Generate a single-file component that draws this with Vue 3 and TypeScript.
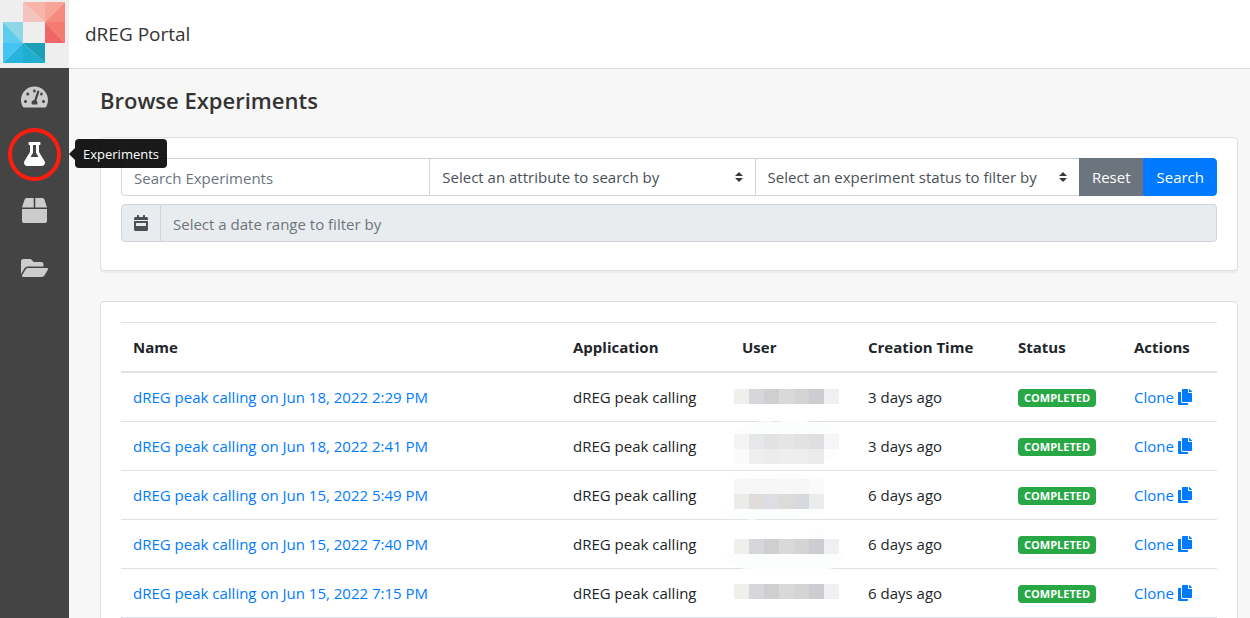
<script setup lang="ts">
import { ref } from 'vue'

interface Tile {
  x: number
  y: number
  fill: string
}

interface Experiment {
  name: string
  application: string
  created: string
  status: string
  haze: string
  tiles: Tile[]
}

interface NavItem {
  label: string
  viewBox: string
  width: number
  path: string
}

const navItems: NavItem[] = [
  {
    label: 'Dashboard',
    viewBox: '0 0 576 512',
    width: 27,
    path: 'M288 32C128.94 32 0 160.94 0 320c0 52.8 14.25 102.26 39.06 144.8 5.61 9.62 16.3 15.2 27.44 15.2h443c11.14 0 21.83-5.58 27.44-15.2C561.75 422.26 576 372.8 576 320c0-159.06-128.94-288-288-288zm0 64c14.71 0 26.58 10.13 30.32 23.65-1.11 2.26-2.64 4.23-3.45 6.67l-9.22 27.67c-5.13 3.49-10.97 6.01-17.64 6.01-17.67 0-32-14.33-32-32S270.33 96 288 96zM96 384c-17.67 0-32-14.33-32-32s14.33-32 32-32 32 14.33 32 32-14.33 32-32 32zm48-160c-17.67 0-32-14.33-32-32s14.33-32 32-32 32 14.33 32 32-14.33 32-32 32zm246.77-72.41l-61.33 184C343.13 347.33 352 364.54 352 384c0 11.72-3.38 22.55-8.88 32H232.88c-5.5-9.45-8.88-20.28-8.88-32 0-33.94 26.5-61.43 59.9-63.59l61.34-184.01c4.17-12.56 17.73-19.45 30.36-15.17 12.57 4.19 19.35 17.79 15.17 30.36zm14.66 57.2l15.52-46.55c3.47-1.29 7.13-2.23 11.05-2.23 17.67 0 32 14.33 32 32s-14.33 32-32 32c-11.38-.01-20.89-6.28-26.57-15.22zM480 384c-17.67 0-32-14.33-32-32s14.33-32 32-32 32 14.33 32 32-14.33 32-32 32z',
  },
  {
    label: 'Experiments',
    viewBox: '0 0 448 512',
    width: 21,
    path: 'M437.2 403.5L320 215V64h8c13.3 0 24-10.7 24-24V24c0-13.3-10.7-24-24-24H120c-13.3 0-24 10.7-24 24v16c0 13.3 10.7 24 24 24h8v151L10.8 403.5C-18.5 450.6 15.3 512 70.9 512h306.2c55.7 0 89.4-61.5 60.1-108.5zM137.9 320l48.2-77.6c3.7-5.2 5.8-11.6 5.8-18.4V64h64v160c0 6.9 2.2 13.2 5.8 18.4l48.2 77.6h-172z',
  },
  {
    label: 'Applications',
    viewBox: '0 0 512 512',
    width: 25,
    path: 'M509.5 184.6L458.9 32.8C452.4 13.2 434.1 0 413.4 0H272v192h238.7c-.4-2.5-.4-5-1.2-7.4zM240 0H98.6c-20.7 0-39 13.2-45.5 32.8L2.5 184.6c-.8 2.4-.8 4.9-1.2 7.4H240V0zM0 224v240c0 26.5 21.5 48 48 48h416c26.5 0 48-21.5 48-48V224H0z',
  },
  {
    label: 'Storage',
    viewBox: '0 0 576 512',
    width: 27,
    path: 'M572.694 292.093L500.27 416.248A63.997 63.997 0 0 1 444.989 448H45.025c-18.523 0-30.064-20.093-20.731-36.093l72.424-124.155A64 64 0 0 1 152 256h399.964c18.523 0 30.064 20.093 20.73 36.093zM152 224h328v-48c0-26.51-21.49-48-48-48H272l-64-64H48C21.49 64 0 85.49 0 112v278.046l69.077-118.418C86.214 242.25 117.989 224 152 224z',
  },
]
const activeNav = 'Experiments'

const row = (y: number, fills: string[]): Tile[] =>
  fills.map((fill, i) => ({ x: 4 + i * 15, y, fill }))

const full = ['#f0efeb', '#d5d7db', '#cfcfd1', '#d9d9d9', '#d4d4d4', '#cdccd1', '#eff0f2']

const experiments: Experiment[] = [
  {
    name: 'dREG peak calling on Jun 18, 2022 2:29 PM',
    application: 'dREG peak calling',
    created: '3 days ago',
    status: 'COMPLETED',
    haze: '',
    tiles: row(16, full),
  },
  {
    name: 'dREG peak calling on Jun 18, 2022 2:41 PM',
    application: 'dREG peak calling',
    created: '3 days ago',
    status: 'COMPLETED',
    haze: 'M0 12C10 2 30-3 45 0L65-2 90 1C108 3 110 14 109 24S98 42 88 41L60 42H15C5 42 3 38 4 12Z',
    tiles: [
      ...row(12, ['#f4f4f3', '#e6e7e9', '#e2e2e4', '#e5e5e5', '#e2e2e2', '#dfdfe2', '#f5f6f7']),
      ...row(27, ['#fafaf9', '#eeeff1', '#ececed', '#eeeeee', '#ededee', '#ebebec']),
    ],
  },
  {
    name: 'dREG peak calling on Jun 15, 2022 5:49 PM',
    application: 'dREG peak calling',
    created: '6 days ago',
    status: 'COMPLETED',
    haze: 'M4 8C25 2 75 1 93 8V41C70 47 40 46 22 49 5 47-6 44-11 40H4Z',
    tiles: [
      ...row(8, ['#f7f7f7', '#f6f6f6', '#f6f6f7', '#f7f7f7', '#f7f7f7', '#fafafa']),
      ...row(23, ['#ebebe9', '#dfdcd9', '#dcdee3', '#dddbd9', '#d8d9de', '#ebecee']),
    ],
  },
  {
    name: 'dREG peak calling on Jun 15, 2022 7:40 PM',
    application: 'dREG peak calling',
    created: '6 days ago',
    status: 'COMPLETED',
    haze: 'M79 9H94V19H79ZM-4 34H114C112 43 105 49 98 49H20C5 49-3 43-4 34Z',
    tiles: row(19, full),
  },
  {
    name: 'dREG peak calling on Jun 15, 2022 7:15 PM',
    application: 'dREG peak calling',
    created: '6 days ago',
    status: 'COMPLETED',
    haze: '',
    tiles: row(15, full),
  },
]

const keyword = ref('')
const attribute = ref('')
const status = ref('')
const dateRange = ref('')

function reset(): void {
  keyword.value = ''
  attribute.value = ''
  status.value = ''
  dateRange.value = ''
}
</script>

<template>
  <div class="portal">
    <header class="topbar">
      <a class="brand" href="#" aria-label="Home">
        <svg width="69" height="68" viewBox="0 0 69 68" aria-hidden="true">
          <path fill="#f7b4aa" d="M23 2H45V22Z" />
          <path fill="#f3c3bf" d="M23 2V22H45Z" />
          <path fill="#f7a598" d="M45 2H65L45 22Z" />
          <path fill="#f48b7c" d="M65 2V22H45Z" />
          <path fill="#f47b70" d="M45 22H65V43Z" />
          <path fill="#ef6666" d="M45 22V43H65Z" />
          <path fill="#8fd6e6" d="M3 22H23V43Z" />
          <path fill="#5fcbef" d="M3 22V43H23Z" />
          <path fill="#45c3f3" d="M3 43H23L3 63Z" />
          <path fill="#28b3dd" d="M23 43V63H3Z" />
          <path fill="#1ba0b8" d="M23 43H45V63Z" />
          <path fill="#1eafd0" d="M23 43V63H45Z" />
        </svg>
      </a>
      <span class="title">dREG Portal</span>
    </header>

    <div class="body">
      <nav class="sidebar" aria-label="Main">
        <a
          v-for="item in navItems"
          :key="item.label"
          class="nav-link"
          :class="{ active: item.label === activeNav }"
          href="#"
          :aria-label="item.label"
        >
          <svg :width="item.width" :viewBox="item.viewBox" aria-hidden="true">
            <path fill="currentColor" :d="item.path" />
          </svg>
          <span v-if="item.label === activeNav" class="ring"></span>
          <span v-if="item.label === activeNav" class="tooltip" role="tooltip">{{ item.label }}</span>
        </a>
      </nav>

      <main class="content">
        <h1>Browse Experiments</h1>

        <section class="card">
          <form class="filters" @submit.prevent>
            <div class="group search">
              <input v-model="keyword" class="field keyword" type="text" aria-label="Search Experiments" placeholder="Search Experiments" />
              <select v-model="attribute" class="field select" aria-label="Attribute">
                <option value="">Select an attribute to search by</option>
                <option value="name">Name</option>
              </select>
              <select v-model="status" class="field select" aria-label="Experiment status">
                <option value="">Select an experiment status to filter by</option>
                <option value="completed">Completed</option>
              </select>
              <button class="btn secondary" type="button" @click="reset">Reset</button>
              <button class="btn primary" type="submit">Search</button>
            </div>
            <div class="group range">
              <label class="addon" for="date-range">
                <svg width="14" height="16" viewBox="0 0 448 512" aria-hidden="true">
                  <path fill="currentColor" d="M0 464c0 26.5 21.5 48 48 48h352c26.5 0 48-21.5 48-48V192H0v272zm64-192c0-8.8 7.2-16 16-16h288c8.8 0 16 7.2 16 16v64c0 8.8-7.2 16-16 16H80c-8.8 0-16-7.2-16-16v-64zM400 64h-48V16c0-8.8-7.2-16-16-16h-32c-8.8 0-16 7.2-16 16v48H160V16c0-8.8-7.2-16-16-16h-32c-8.8 0-16 7.2-16 16v48H48C21.5 64 0 85.5 0 112v48h448v-48c0-26.5-21.5-48-48-48z" />
                </svg>
              </label>
              <input id="date-range" v-model="dateRange" class="field dates" type="text" readonly aria-label="Date range" placeholder="Select a date range to filter by" />
            </div>
          </form>
        </section>

        <section class="card">
          <table>
            <colgroup>
              <col />
              <col class="c-app" />
              <col class="c-user" />
              <col class="c-time" />
              <col class="c-status" />
              <col class="c-actions" />
            </colgroup>
            <thead>
              <tr>
                <th scope="col">Name</th>
                <th scope="col">Application</th>
                <th scope="col">User</th>
                <th scope="col">Creation Time</th>
                <th scope="col">Status</th>
                <th scope="col">Actions</th>
              </tr>
            </thead>
            <tbody>
              <tr v-for="e in experiments" :key="e.name">
                <td><a href="#">{{ e.name }}</a></td>
                <td>{{ e.application }}</td>
                <td class="user">
                  <svg width="126" height="48" viewBox="0 0 126 48" aria-hidden="true">
                    <path v-if="e.haze" :d="e.haze" fill="#fcfdfd" />
                    <rect v-for="(t, i) in e.tiles" :key="i" :x="t.x" :y="t.y" width="15" height="15" :fill="t.fill" />
                  </svg>
                </td>
                <td>{{ e.created }}</td>
                <td><span class="badge">{{ e.status }}</span></td>
                <td>
                  <a class="clone" href="#">Clone
                    <svg width="14" height="16" viewBox="0 0 448 512" aria-hidden="true">
                      <path fill="currentColor" d="M320 448v40c0 13.255-10.745 24-24 24H24c-13.255 0-24-10.745-24-24V120c0-13.255 10.745-24 24-24h72v296c0 30.879 25.121 56 56 56h168zm0-344V0H152c-13.255 0-24 10.745-24 24v368c0 13.255 10.745 24 24 24h272c13.255 0 24-10.745 24-24V128H344c-13.2 0-24-10.8-24-24zm120.971-31.029L375.029 7.029A24 24 0 0 0 358.059 0H352v96h96v-6.059a24 24 0 0 0-7.029-16.97z" />
                    </svg>
                  </a>
                </td>
              </tr>
            </tbody>
          </table>
        </section>
      </main>
    </div>
  </div>
</template>

<style>
body {
  margin: 0;
}
</style>

<style scoped>
.portal,
.portal * {
  box-sizing: border-box;
}

.portal {
  display: flex;
  flex-direction: column;
  height: 100vh;
  overflow: hidden;
  background: #f7f7f7;
  color: #212529;
  font-family: "Open Sans", "Noto Sans", sans-serif;
  font-size: 15px;
  line-height: 24px;
}

a {
  color: #007bff;
  text-decoration: none;
}

.topbar {
  display: flex;
  flex: none;
  align-items: center;
  height: 69px;
  background: #fff;
  border-bottom: 1px solid #dddddd;
}

.brand {
  display: block;
  height: 68px;
  background: #eeeeee;
}

.brand svg,
.nav-link svg,
.addon svg {
  display: block;
}

.title {
  margin-left: 16px;
  color: #333;
  font-size: 19px;
}

.body {
  display: flex;
  flex: 1;
  min-height: 0;
}

.sidebar {
  position: relative;
  z-index: 2;
  display: flex;
  flex: none;
  flex-direction: column;
  width: 69px;
  margin-top: -1px;
  background: #444;
}

.nav-link {
  position: relative;
  display: flex;
  align-items: center;
  justify-content: center;
  height: 57px;
  color: #ccc;
}

.nav-link.active {
  color: #fff;
}

.ring {
  position: absolute;
  top: 3px;
  left: 8px;
  width: 53px;
  height: 53px;
  border: 4px solid #ff1d10;
  border-radius: 50%;
}

.tooltip {
  position: absolute;
  top: 14px;
  left: 75px;
  padding: 5px 8px 3px;
  border-radius: 4px;
  background: rgba(0, 0, 0, 0.9);
  color: #fff;
  font-size: 13px;
  line-height: 21px;
  white-space: nowrap;
}

.tooltip::before {
  position: absolute;
  top: 9px;
  left: -6px;
  border: 6px solid transparent;
  border-right-color: rgba(0, 0, 0, 0.9);
  border-left-width: 0;
  content: "";
}

.content {
  display: flex;
  flex: 1;
  flex-direction: column;
  gap: 30px;
  min-width: 0;
  padding: 16px 12px 0 31px;
  overflow-y: auto;
  scrollbar-width: none;
}

h1 {
  margin: 0 0 -8px;
  color: #333;
  font-size: 22px;
  font-weight: 600;
  line-height: 30px;
}

.card {
  flex: none;
  padding: 20px;
  border: 1px solid #dfdfdf;
  border-radius: 4px;
  background: #fff;
  box-shadow: 0 2px 0 rgba(0, 0, 0, 0.04);
}

.filters {
  display: flex;
  flex-direction: column;
  gap: 8px;
  padding-bottom: 8px;
}

.group {
  display: grid;
}

.search {
  grid-template-columns: 310fr 326fr 325fr auto auto;
}

.range {
  grid-template-columns: 40px 1fr;
}

.field,
.btn,
.addon {
  height: 38px;
  margin: 0;
  border: 1px solid #ced4da;
  border-radius: 0;
  font-family: inherit;
  font-size: 15px;
  line-height: 24px;
}

.field {
  min-width: 0;
  padding: 7px 12px 5px;
  background: #fff;
  color: #495057;
}

.field::placeholder {
  color: #6c757d;
  opacity: 1;
}

.field.keyword {
  border-radius: 4px 0 0 4px;
}

.field.select {
  margin-left: -1px;
  padding: 6px 28px 6px 12px;
  appearance: none;
  background: #fff url("data:image/svg+xml,%3csvg xmlns='http://www.w3.org/2000/svg' viewBox='0 0 4 5'%3e%3cpath fill='%23343a40' d='M2 0L0 2h4zm0 5L0 3h4z'/%3e%3c/svg%3e") no-repeat right 12px center / 8px 10px;
}

.btn {
  padding: 6px 12px;
  color: #fff;
}

.secondary {
  margin-left: -1px;
  border-color: #6c757d;
  background: #6c757d;
}

.primary {
  border-color: #007bff;
  border-radius: 0 4px 4px 0;
  background: #007bff;
}

.addon {
  display: flex;
  align-items: center;
  padding: 6px 12px;
  border-radius: 4px 0 0 4px;
  background: #e9ecef;
  color: #495057;
}

.field.dates {
  margin-left: -1px;
  border-radius: 0 4px 4px 0;
  background: #e9ecef;
}

table {
  width: 100%;
  border-spacing: 0;
  table-layout: fixed;
}

.c-app {
  width: 169px;
}

.c-user {
  width: 126px;
}

.c-time {
  width: 150px;
}

.c-status {
  width: 116px;
}

.c-actions {
  width: 95px;
}

th,
td {
  padding: 12px;
  text-align: left;
  white-space: nowrap;
}

th {
  border-top: 1px solid #dee2e6;
  border-bottom: 2px solid #dee2e6;
  font-weight: 700;
}

td {
  height: 49px;
  border-bottom: 1px solid #dee2e6;
}

.user {
  padding: 0;
}

.user svg {
  display: block;
  overflow: visible;
}

.badge {
  display: block;
  width: max-content;
  margin-top: 2px;
  padding: 0 6px;
  border-radius: 4px;
  background: #28a745;
  color: #fff;
  font-size: 11px;
  font-weight: 700;
  line-height: 18px;
}

.clone {
  display: flex;
  align-items: center;
  gap: 4px;
}
</style>
